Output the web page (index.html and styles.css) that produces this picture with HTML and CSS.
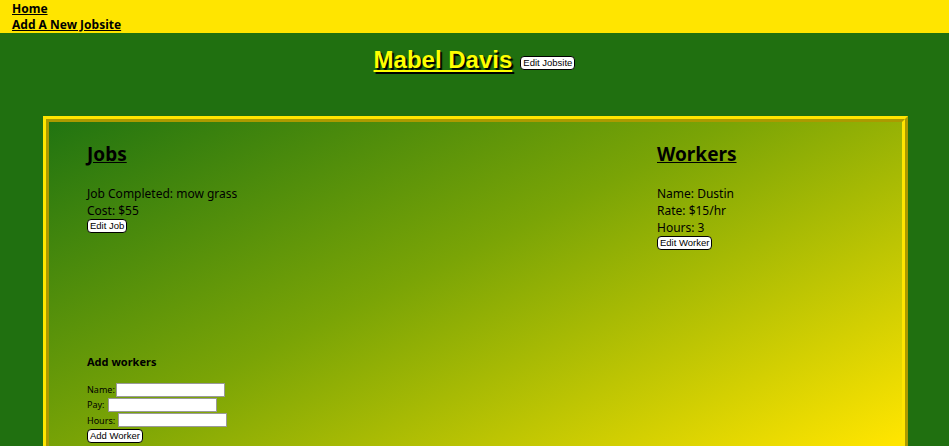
FILE: index.html
```html
<!DOCTYPE html>
<html>
<head>
<meta charset="utf-8">
<link rel="stylesheet" href="styles.css">
</head>
<body>
<nav class="topnav">
  <a class="navlink" href="#">Home</a>
  <a class="navlink" href="#">Add A New Jobsite</a>
</nav>
<header class="title">
  <h1 class="site-name">Mabel Davis</h1>
  <button class="btn">Edit Jobsite</button>
</header>
<section class="panel">
  <div class="columns">
    <div class="col">
      <h2 class="col-title">Jobs</h2>
      <p class="line">Job Completed: mow grass</p>
      <p class="line">Cost: $55</p>
      <button class="btn">Edit Job</button>
    </div>
    <div class="col">
      <h2 class="col-title">Workers</h2>
      <p class="line">Name: Dustin</p>
      <p class="line">Rate: $15/hr</p>
      <p class="line">Hours: 3</p>
      <button class="btn">Edit Worker</button>
    </div>
  </div>
  <form class="addform">
    <h3 class="form-title">Add workers</h3>
    <div class="field"><label>Name:</label><input class="inp" type="text"></div>
    <div class="field"><label>Pay: </label><input class="inp" type="text"></div>
    <div class="field"><label>Hours: </label><input class="inp" type="text"></div>
    <button class="btn" type="button">Add Worker</button>
  </form>
</section>
</body>
</html>
```
FILE: styles.css
```css
html, body {
  margin: 0;
  padding: 0;
}
body {
  background: #207010;
  font-family: "Noto Sans", "Open Sans", sans-serif;
  color: #000;
  overflow: hidden;
}
.topnav {
  background: #ffe500;
  height: 33px;
  padding: 1px 12px 0;
  box-sizing: border-box;
  display: flex;
  flex-direction: column;
  align-items: flex-start;
}
.navlink {
  color: #000;
  font-weight: bold;
  font-size: 12px;
  line-height: 16px;
  text-decoration: underline;
}
.title {
  display: flex;
  justify-content: center;
  align-items: flex-start;
  gap: 8px;
  padding-top: 12px;
  height: 71px;
  box-sizing: border-box;
}
.site-name {
  margin: 0;
  font-family: "Liberation Sans", Arial, sans-serif;
  font-size: 24px;
  line-height: 30px;
  font-weight: bold;
  color: #ffff00;
  text-decoration: underline;
  text-shadow: 2px 2px 1px #000;
}
.btn {
  display: block;
  font-family: "Liberation Sans", Arial, sans-serif;
  font-size: 9.5px;
  padding: 0 2px;
  height: 14px;
  background: #fff;
  border: 1px solid #000;
  border-radius: 4px;
  color: #000;
  line-height: 12px;
  margin: 0;
}
.title .btn {
  margin-top: 11px;
}
.panel {
  margin: 12px 41px 0 43px;
  border: 6px ridge #ffe500;
  background: linear-gradient(to bottom right, #217411 0%, #7aa406 40%, #ffe500 88%);
  height: 400px;
  padding: 19px 38px 0;
}
.columns {
  display: flex;
}
.col {
  width: 570px;
}
.col + .col {
  width: auto;
}
.col-title {
  margin: 0 0 18px;
  font-size: 19px;
  line-height: 26px;
  font-weight: bold;
  text-decoration: underline;
}
.line {
  margin: 0;
  font-size: 12px;
  line-height: 17px;
}
.addform {
  margin-top: 104px;
}
.form-title {
  margin: 0 0 12px;
  font-size: 11px;
  line-height: 16px;
  font-weight: bold;
}
.field {
  display: flex;
  align-items: center;
  height: 15.3px;
  font-size: 9px;
}
.field label {
  line-height: 15px;
  white-space: pre;
}
.inp {
  width: 103px;
  height: 10px;
  padding: 1px 2px;
  border: 1px solid #999;
  margin: 0 0 0 1px;
  font-size: 10px;
}
.addform .btn {
  margin-top: 1px;
}
```
